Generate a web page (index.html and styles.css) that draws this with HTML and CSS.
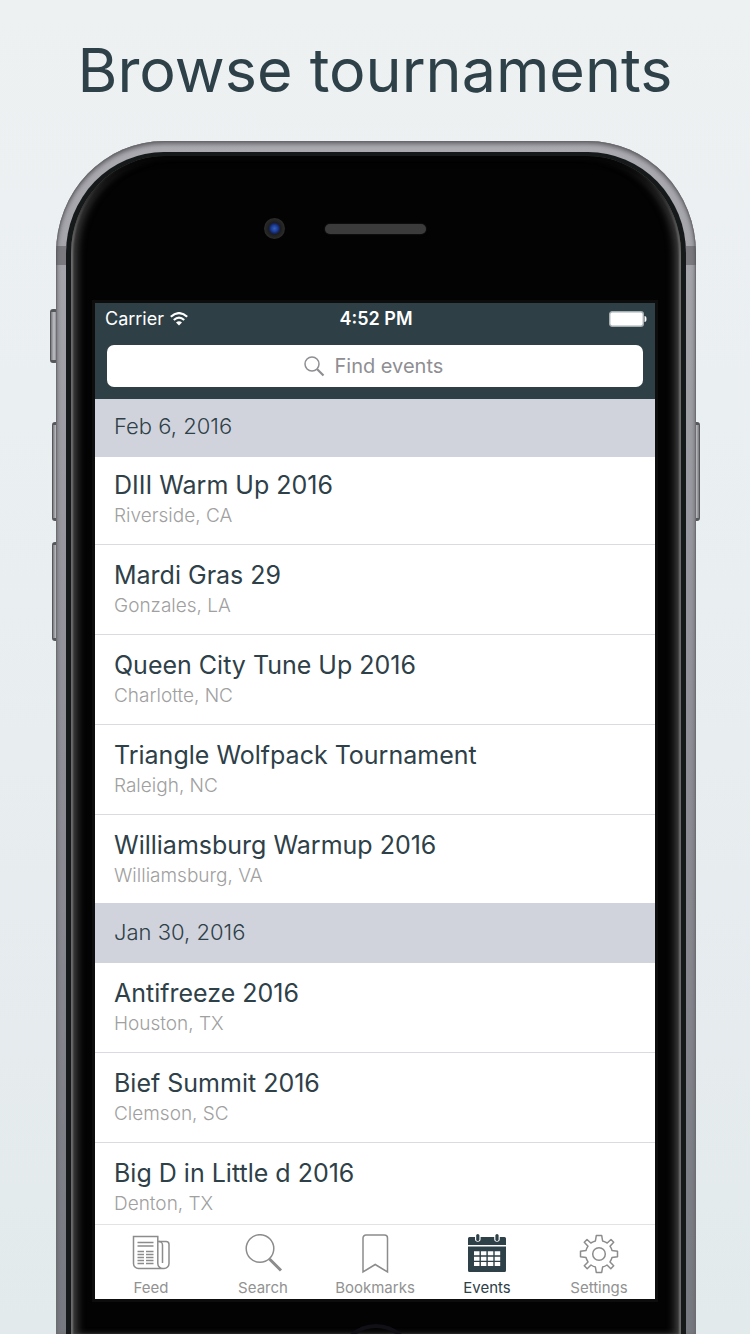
FILE: index.html
```
<!DOCTYPE html>
<html lang="en">
<head>
<meta charset="utf-8">
<meta name="viewport" content="width=device-width, initial-scale=1">
<title>Browse tournaments</title>
<link rel="stylesheet" href="styles.css">
</head>
<body>
<main class="promo">
  <h1 class="headline">Browse tournaments</h1>
  <div class="phone">
    <span class="key key-mute"></span>
    <span class="key key-up"></span>
    <span class="key key-down"></span>
    <span class="key key-power"></span>
    <div class="metal">
      <span class="antenna antenna-left"></span>
      <span class="antenna antenna-right"></span>
      <div class="rim">
        <div class="glass">
          <div class="sensors">
            <span class="camera"></span>
            <span class="speaker"></span>
          </div>
          <div class="screen">
            <header class="top">
              <div class="status">
                <span class="carrier">Carrier
                  <svg width="18" height="14" viewBox="0 0 18 14" fill="none" stroke="#fff" stroke-width="2.2" aria-hidden="true"><path d="M.8 4.8Q9-2.6 17.2 4.8M3.8 8Q9 3.4 14.2 8"/><path d="M9 13.6 6 10.500Q9 8 12 10.500Z" fill="#fff" stroke="none"/></svg>
                </span>
                <span class="clock">4:52 PM</span>
                <svg class="battery" width="38" height="16" viewBox="0 0 38 16" aria-hidden="true"><rect x=".7" y=".7" width="33.600" height="14.600" rx="2.500" fill="#fff" stroke="#a5aeb1" stroke-width="1.400"/><path d="M35.500 5q2 0 2 3t-2 3z" fill="#fff"/></svg>
              </div>
              <label class="find">
                <svg width="21" height="21" viewBox="0 0 21 21" fill="none" stroke="#8e8e93" aria-hidden="true"><circle cx="8" cy="8" r="7" stroke-width="1.500"/><path d="m13 13 6.500 6.500" stroke-width="2.200"/></svg>
                <input class="find-input" type="text" placeholder="Find events" aria-label="Find events">
              </label>
            </header>
            <div class="list">
              <h2 class="date">Feb 6, 2016</h2>
              <article class="event"><h3 class="name">DIII Warm Up 2016</h3><p class="place">Riverside, CA</p></article>
              <article class="event"><h3 class="name">Mardi Gras 29</h3><p class="place">Gonzales, LA</p></article>
              <article class="event"><h3 class="name">Queen City Tune Up 2016</h3><p class="place">Charlotte, NC</p></article>
              <article class="event"><h3 class="name">Triangle Wolfpack Tournament</h3><p class="place">Raleigh, NC</p></article>
              <article class="event"><h3 class="name">Williamsburg Warmup 2016</h3><p class="place">Williamsburg, VA</p></article>
              <h2 class="date">Jan 30, 2016</h2>
              <article class="event"><h3 class="name">Antifreeze 2016</h3><p class="place">Houston, TX</p></article>
              <article class="event"><h3 class="name">Bief Summit 2016</h3><p class="place">Clemson, SC</p></article>
              <article class="event"><h3 class="name">Big D in Little d 2016</h3><p class="place">Denton, TX</p></article>
            </div>
            <nav class="tabs">
              <button class="tab" type="button">
                <svg width="40" height="40" viewBox="0 0 40 40" fill="none" stroke="#8c8c8c" stroke-width="1.500" aria-hidden="true"><path d="M32 34.500H7.500a5 5 0 0 1-5-5V2.500h24.300v27a5 5 0 0 0 5 5h1.200a5 5 0 0 0 5-5V10.500a3 3 0 0 0-3-3h-8.200"/><path d="M28 7.500a3.500 3.500 0 0 1 3.500 3.500V29"/><path d="M6.500 8.500h16M6.500 12h16M6.500 17.500h6.500M15 17.500h7.500M6.500 20.500h6.500M15 20.500h7.500M6.500 23.500h6.500M15 23.500h7.500M6.500 26.500h6.500M15 26.500h7.500M6.500 29.500h6.500M15 29.500h7.500"/></svg>
                Feed
              </button>
              <button class="tab" type="button">
                <svg width="40" height="40" viewBox="0 0 40 40" fill="none" stroke="#8c8c8c" aria-hidden="true"><circle cx="17" cy="14.500" r="13.800" stroke-width="1.500"/><path d="m26.500 25 11.500 11.500" stroke-width="3"/></svg>
                Search
              </button>
              <button class="tab" type="button">
                <svg width="40" height="40" viewBox="0 0 40 40" fill="none" stroke="#8c8c8c" stroke-width="1.500" aria-hidden="true"><path d="M8 38V4a3 3 0 0 1 3-3H29.500a3 3 0 0 1 3 3V38l-12.300-7.500Z"/></svg>
                Bookmarks
              </button>
              <button class="tab tab-on" type="button">
                <svg width="40" height="40" viewBox="0 0 40 40" fill="#2e4048" aria-hidden="true"><path d="M1 11V4.500a1.500 1.500 0 0 1 1.500-1.500H8v2a2.800 2.800 0 0 0 5.600 0V3h13.600v2a2.800 2.800 0 0 0 5.600 0V3h4.700A1.500 1.500 0 0 1 39 4.500V11Z"/><rect x="9.200" y="0" width="3.200" height="7" rx="1.600"/><rect x="28.400" y="0" width="3.200" height="7" rx="1.600"/><path fill-rule="evenodd" d="M1 12.500h38V36.500a1.500 1.500 0 0 1-1.500 1.500h-35A1.500 1.500 0 0 1 1 36.500ZM7 17.300v4h5.500v-4Zm6.900 0v4h5.500v-4Zm6.900 0v4h5.500v-4Zm6.900 0v4h5.500v-4ZM7 22.700v4h5.500v-4Zm6.900 0v4h5.500v-4Zm6.900 0v4h5.500v-4Zm6.900 0v4h5.500v-4ZM7 28v4h5.500v-4Zm6.900 0v4h5.500v-4Zm6.900 0v4h5.500v-4Zm6.900 0v4h5.500v-4Z"/></svg>
                Events
              </button>
              <button class="tab" type="button">
                <svg width="40" height="40" viewBox="0 0 40 40" fill="none" stroke="#8c8c8c" stroke-width="1.500" stroke-linejoin="round" aria-hidden="true"><circle cx="20" cy="20" r="6.300"/><path d="M17.300 1.500h5.400L23.600 7Q26 7.700 28.200 9L32 5.500 34.700 8.200 31 12.200Q32.400 14.300 33 16.500L38.500 17.300V22.700L33 23.500Q32.400 25.800 31 27.900L34.700 31.800 31.800 34.700 28 31Q25.900 32.400 23.600 33L22.700 38.500H17.300L16.400 33Q14.100 32.400 12 31L8.200 34.700 5.300 31.800 9 27.900Q7.600 25.800 7 23.500L1.500 22.700V17.300L7 16.500Q7.600 14.300 9 12.200L5.300 8.200 8 5.500 11.800 9Q14 7.700 16.400 7Z"/></svg>
                Settings
              </button>
            </nav>
          </div>
          <span class="home"></span>
        </div>
      </div>
    </div>
  </div>
</main>
</body>
</html>
```
FILE: styles.css
```
* { box-sizing: border-box; }

body {
  margin: 0;
  font-family: Inter, "Noto Sans", sans-serif;
  color: #2e4048;
}

.promo {
  display: flex;
  flex-direction: column;
  height: 100vh;
  min-height: 800px;
  overflow: hidden;
  background: linear-gradient(#edf1f2, #e9eef1 45%, #e3eaec);
}

.headline {
  margin: 0;
  height: 141px;
  flex: none;
  font-size: 61px;
  line-height: 140px;
  font-weight: 400;
  text-align: center;
  white-space: nowrap;
}

.phone {
  position: relative;
  flex: 1;
  min-height: 0;
  display: flex;
  margin: 0 54px 0 56px;
}

.metal {
  position: relative;
  flex: 1;
  min-width: 0;
  display: flex;
  padding: 11px 10px 0;
  border-radius: 108px 108px 0 0 / 112px 112px 0 0;
  background: linear-gradient(#aaaab0, #8e8f97 50%, #777980);
  box-shadow: inset 0 2px 4px 1px #66666b, inset 0 0 1px 1px #77777b;
  overflow: hidden;
}

.rim {
  flex: 1;
  min-width: 0;
  display: flex;
  padding: 4px 5px 0;
  border-radius: 98px 98px 0 0 / 101px 101px 0 0;
  background: #15191a;
}

.glass {
  position: relative;
  flex: 1;
  min-width: 0;
  display: flex;
  flex-direction: column;
  padding: 0 26px 35px 24px;
  border-radius: 94px 94px 0 0 / 97px 97px 0 0;
  background: #030303;
  box-shadow:
    inset 0 9px 6px -4px #030303,
    inset 3px 0 2px -1px #777,
    inset -3px 0 2px -1px #777,
    inset 9px 0 8px -3px #444,
    inset -9px 0 8px -3px #444;
  overflow: hidden;
}

.antenna {
  position: absolute;
  top: 105px;
  width: 10px;
  height: 19px;
  background: rgba(80, 80, 84, 0.5);
}
.antenna-left { left: 0; }
.antenna-right { right: 0; }

.key {
  position: absolute;
  left: -4px;
  width: 8px;
  height: 99px;
  border: 1px solid #55575b;
  border-top-width: 3px;
  border-bottom-width: 3px;
  border-radius: 3px;
  background: linear-gradient(to right, #77797d, #c0c1c6 50%, #77797d);
}
.key-mute { top: 168px; left: -6px; height: 54px; }
.key-up { top: 281px; }
.key-down { top: 401px; }
.key-power { top: 281px; left: auto; right: -4px; }

.sensors {
  flex: none;
  height: 147px;
  display: flex;
  align-items: center;
  justify-content: center;
  gap: 40px;
  padding: 0 60px 2px 0;
}

.camera {
  width: 21px;
  height: 21px;
  border-radius: 50%;
  background: radial-gradient(circle, #3a5fb8 0, #1b3f9a 3px, #15245a 5px, #1d1d1f 6px, #2a2a2a 10px);
}

.speaker {
  width: 101px;
  height: 10px;
  border-radius: 5px;
  background: #3b3b3b;
  box-shadow: 0 0 2px #2b2b2b;
}

.screen {
  flex: 1;
  min-height: 0;
  display: flex;
  flex-direction: column;
  background: #fff;
  box-shadow: 0 0 0 3px #0d0d0d;
}

.top {
  flex: none;
  padding: 0 12px 12px;
  background: #2e3f46;
  color: #fff;
}

.status {
  display: grid;
  grid-template-columns: 1fr auto 1fr;
  align-items: center;
  height: 42px;
  padding: 0 0 10px;
  margin: 0 -4px 0 -2px;
  font-size: 18px;
  line-height: 32px;
}

.carrier {
  display: flex;
  align-items: center;
  gap: 6px;
}

.clock { font-weight: 600; }
.battery { justify-self: end; }

.find {
  display: flex;
  align-items: center;
  justify-content: center;
  gap: 10px;
  height: 42px;
  border-radius: 7px;
  background: #fff;
}

.find-input {
  width: 112px;
  padding: 0;
  border: 0;
  outline: 0;
  background: none;
  font: 20px/24px Inter, "Noto Sans", sans-serif;
  color: #2e4048;
}
.find-input::placeholder { color: #8e8e93; opacity: 1; }

.list {
  flex: 1;
  min-height: 0;
  overflow: hidden;
}

.date {
  position: relative;
  height: 60px;
  margin: -2px 0 0;
  padding: 0 19px;
  background: #d0d3dc;
  font-size: 22px;
  line-height: 58px;
  font-weight: 300;
}
.date:first-child { margin-bottom: -2px; }

.event {
  height: 90px;
  padding: 14px 19px 0;
  border-bottom: 1px solid #d9dbe0;
  white-space: nowrap;
}

.name {
  margin: 0;
  font-size: 25px;
  line-height: 32px;
  font-weight: 400;
}

.place {
  margin: 0;
  font-size: 19px;
  line-height: 30px;
  font-weight: 300;
  color: #a0a0a0;
}

.tabs {
  flex: none;
  display: grid;
  grid-template-columns: repeat(5, 1fr);
  height: 75px;
  border-top: 1px solid #e3e3e3;
  background: #fff;
}

.tab {
  display: flex;
  flex-direction: column;
  align-items: center;
  gap: 4px;
  min-width: 0;
  padding: 9px 0 0;
  border: 0;
  background: none;
  font: 15px/20px Inter, "Noto Sans", sans-serif;
  color: #929292;
}
.tab-on { color: #2e4048; }

.home {
  position: absolute;
  left: 50%;
  bottom: -66px;
  width: 76px;
  height: 76px;
  margin-left: -38px;
  border: 4px solid #101016;
  border-radius: 50%;
}
```
